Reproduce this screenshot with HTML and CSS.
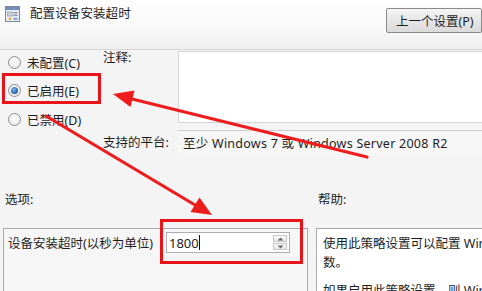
FILE: index.html
```html
<!DOCTYPE html>
<html lang="zh-CN">
<head>
<meta charset="utf-8">
<title>配置设备安装超时</title>
<link rel="stylesheet" href="styles.css">
</head>
<body>
<div class="win">
  <header class="head">
    <div class="title">
      <svg class="ico" width="15" height="16" viewBox="0 0 15 16">
        <rect x="0.5" y="0.5" width="14" height="15" fill="#e9edf2" stroke="#7d8796"/>
        <rect x="1" y="1" width="13" height="3" fill="#6f8fb8"/>
        <rect x="2.5" y="6" width="5" height="4" fill="#c8cfd8" stroke="#8a94a2" stroke-width="0.6"/>
        <rect x="8.5" y="6" width="4" height="1.4" fill="#8a94a2"/>
        <rect x="8.5" y="8.6" width="4" height="1.4" fill="#8a94a2"/>
        <circle cx="5" cy="12.8" r="1.3" fill="#e0a53a"/>
        <rect x="8.5" y="11.8" width="4" height="2" fill="#7aa0cf"/>
      </svg>
      <span class="title-text">配置设备安装超时</span>
    </div>
    <button class="btn">上一个设置(P)</button>
  </header>

  <section class="top">
    <div class="radios">
      <label class="radio"><span class="dot"></span>未配置(C)</label>
      <label class="radio"><span class="dot on"></span>已启用(E)</label>
      <label class="radio"><span class="dot"></span>已禁用(D)</label>
    </div>
    <div class="fields">
      <div class="flabel">注释:</div>
      <div class="comment"></div>
      <div class="flabel plabel">支持的平台:</div>
      <div class="platform">至少 Windows 7 或 Windows Server 2008 R2</div>
    </div>
  </section>

  <div class="captions">
    <span class="cap-opt">选项:</span>
    <span class="cap-help">帮助:</span>
  </div>

  <section class="panels">
    <div class="options">
      <div class="opt-row">
        <span class="opt-label">设备安装超时(以秒为单位)</span>
        <div class="spin">
          <span class="spin-val">1800</span><span class="caret"></span>
          <div class="spin-btns">
            <span class="sb"><svg width="7" height="4" viewBox="0 0 7 4"><path d="M0.5 3.5 L3.5 0.5 L6.5 3.5 Z" fill="#6b6b6b"/></svg></span>
            <span class="sb"><svg width="7" height="4" viewBox="0 0 7 4"><path d="M0.5 0.5 L3.5 3.5 L6.5 0.5 Z" fill="#6b6b6b"/></svg></span>
          </div>
        </div>
      </div>
    </div>
    <div class="help">
      <div class="hl">使用此策略设置可以配置 Windows 等待设备安装任务完成的秒</div>
      <div class="hl">数。</div>
      <div class="hl para">如果启用此策略设置，则 Windows 将等待指定的秒数</div>
    </div>
  </section>

  <div class="mark mark1"></div>
  <div class="mark mark2"></div>
  <svg class="arrows" width="482" height="291" viewBox="0 0 482 291">
    <line x1="367" y1="157" x2="132" y2="99" stroke="#ee1c1c" stroke-width="3.2" stroke-linecap="round"/>
    <polygon points="113,94 134.5,90.5 130.5,107" fill="#ee1c1c"/>
    <line x1="46" y1="116" x2="195" y2="205" stroke="#ee1c1c" stroke-width="3.2" stroke-linecap="round"/>
    <polygon points="212,215 190.5,212 199.5,197.5" fill="#ee1c1c"/>
  </svg>
</div>
</body>
</html>
```

FILE: styles.css
```css
* { box-sizing: border-box; }
html, body { margin: 0; padding: 0; }
body {
  width: 482px;
  height: 291px;
  overflow: hidden;
  background: #f4f4f4;
  font-family: "Noto Sans", "Noto Sans CJK SC", sans-serif;
  font-size: 12px;
  color: #1e1e1e;
}
.win {
  position: relative;
  width: 482px;
  height: 291px;
  overflow: hidden;
}

/* header */
.head {
  height: 50px;
  display: flex;
  justify-content: space-between;
  align-items: flex-start;
  background: linear-gradient(#ffffff, #f6f6f6 70%, #efefef);
  border-bottom: 1px solid #d6d6d6;
}
.title {
  display: flex;
  align-items: center;
  gap: 10px;
  padding: 6px 0 0 5px;
}
.ico { display: block; }
.title-text {
  font-size: 12.5px;
  line-height: 16px;
  letter-spacing: 0.1px;
}
.btn {
  margin-top: 8px;
  width: 96px;
  height: 25px;
  border: 1px solid #8a8a8a;
  border-radius: 2px;
  background: linear-gradient(#f5f5f5, #e6e6e6 50%, #dadada);
  font-family: inherit;
  font-size: 12.5px;
  color: #1e1e1e;
  text-align: left;
  padding: 0 0 0 9px;
}

/* top area */
.top {
  display: flex;
  height: 108px;
}
.radios {
  width: 100px;
  display: flex;
  flex-direction: column;
  margin-top: -2px;
}
.radio {
  height: 28.5px;
  display: flex;
  align-items: center;
  gap: 6px;
  padding-left: 8px;
  font-size: 12.5px;
}
.dot {
  width: 13px;
  height: 13px;
  border-radius: 50%;
  border: 1px solid #8e8f8f;
  background: radial-gradient(circle at 50% 40%, #ffffff, #e4e4e4);
  position: relative;
}
.dot.on::after {
  content: "";
  position: absolute;
  left: 2px;
  top: 2px;
  width: 7px;
  height: 7px;
  border-radius: 50%;
  background: radial-gradient(circle at 40% 35%, #7fb6ee, #1d5ea8 70%, #17406f);
}
.fields {
  flex: 1;
  display: grid;
  grid-template-columns: 78px 1fr;
  grid-template-rows: 80px 28px;
}
.flabel {
  padding-left: 3px;
  line-height: 16px;
  font-size: 12.5px;
}
.plabel { line-height: 26px; }
.comment {
  margin-top: 1px;
  height: 72px;
  background: #ffffff;
  border: 1px solid #d4d4d4;
  border-right: none;
}
.platform {
  border-top: 1px solid #cfcfcf;
  padding-left: 5px;
  line-height: 26px;
  font-size: 12.5px;
  letter-spacing: 0.25px;
  white-space: nowrap;
  background: #f6f6f6;
}

/* captions */
.captions {
  display: grid;
  grid-template-columns: 315px 1fr;
  margin-top: 34px;
  line-height: 16px;
  font-size: 12.5px;
}
.cap-opt { padding-left: 5px; }
.cap-help { padding-left: 3px; }

/* panels */
.panels {
  display: grid;
  grid-template-columns: 305px 180px;
  gap: 8px;
  margin-top: 20px;
  padding-left: 3px;
  height: 80px;
}
.options {
  border: 1px solid #a9a9a9;
  border-bottom: none;
  padding: 3px 0 0 4px;
  background: #f6f6f6;
}
.opt-row {
  display: flex;
  align-items: center;
}
.opt-label {
  width: 158px;
  font-size: 12.5px;
  white-space: nowrap;
}
.spin {
  width: 124px;
  height: 21px;
  border: 1px solid #abadb3;
  background: #ffffff;
  display: flex;
  align-items: center;
  padding-left: 2px;
}
.spin-val {
  font-size: 13px;
  line-height: 16px;
}
.caret {
  width: 1px;
  height: 15px;
  background: #111;
}
.spin-btns {
  margin-left: auto;
  margin-right: 2px;
  display: flex;
  flex-direction: column;
  gap: 1px;
}
.sb {
  width: 14px;
  height: 7px;
  border: 1px solid #c6c6c6;
  background: linear-gradient(#fafafa, #e8e8e8);
  display: flex;
  align-items: center;
  justify-content: center;
}
.sb svg { display: block; }
.help {
  border: 1px solid #a9a9a9;
  border-bottom: none;
  border-right: none;
  background: #ffffff;
  padding: 5px 0 0 6px;
  overflow: hidden;
}
.hl {
  white-space: nowrap;
  line-height: 19px;
  font-size: 12.5px;
}
.hl.para { margin-top: 9px; }

/* annotations */
.mark {
  position: absolute;
  border: 3px solid #e8141a;
}
.mark1 { left: 2px; top: 73px; width: 99px; height: 31px; }
.mark2 { left: 160px; top: 219px; width: 143px; height: 45px; }
.arrows {
  position: absolute;
  left: 0;
  top: 0;
  pointer-events: none;
}
```
